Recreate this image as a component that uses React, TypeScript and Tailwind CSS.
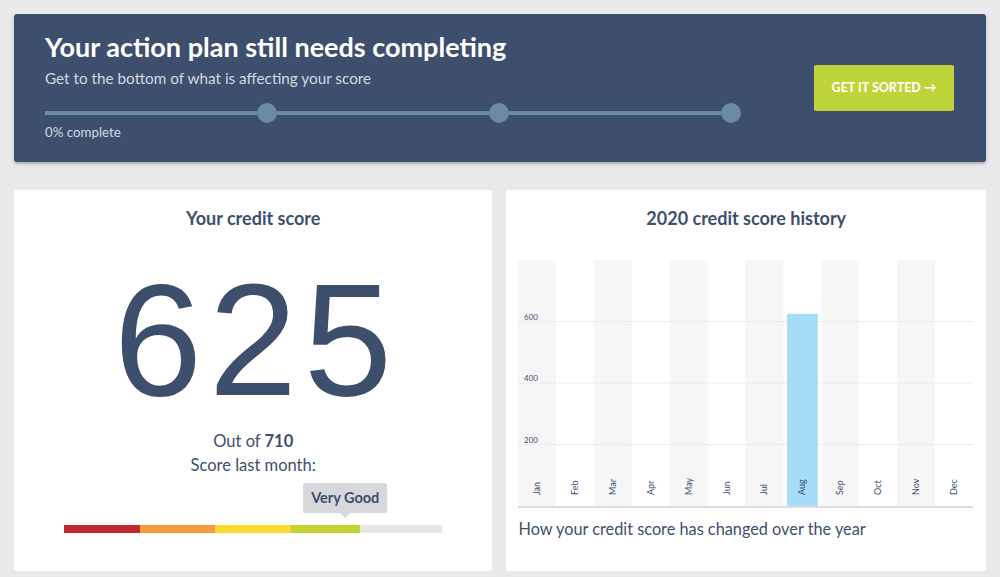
import React from "react";

const months = ["Jan", "Feb", "Mar", "Apr", "May", "Jun", "Jul", "Aug", "Sep", "Oct", "Nov", "Dec"];

function Chart() {
  const W = 455;
  const H = 248;
  const cw = W / 12;
  const base = 246;
  const scale = 246 / 800;
  const grid = [600, 400, 200];
  return (
    <svg width={W} height={H} viewBox={`0 0 ${W} ${H}`} className="block">
      {months.map((m, i) =>
        i % 2 === 0 ? <rect key={m} x={i * cw} y={0} width={cw} height={base} fill="#f6f6f6" /> : null
      )}
      {grid.map((g) => (
        <line key={g} x1={0} x2={W} y1={base - g * scale} y2={base - g * scale} stroke="#ececec" strokeWidth={1} />
      ))}
      <rect x={7 * cw + 3.5} y={base - 625 * scale} width={cw - 7} height={625 * scale} fill="#a6dcf5" />
      {grid.map((g) => (
        <text key={"t" + g} x={6} y={base - g * scale - 2} fontSize={8} fill="#3d4f6d" fontFamily="Lato, sans-serif">
          {g}
        </text>
      ))}
      {months.map((m, i) => (
        <text
          key={"m" + m}
          transform={`translate(${i * cw + cw / 2 + 3}, 235) rotate(-90)`}
          fontSize={9}
          fill="#3d4f6d"
          fontFamily="Lato, sans-serif"
        >
          {m}
        </text>
      ))}
      <line x1={0} x2={W} y1={base + 1} y2={base + 1} stroke="#dcdcdc" strokeWidth={2} />
    </svg>
  );
}

export default function App() {
  return (
    <div className="w-[1000px] h-[577px] bg-[#e9e9e9] p-[14px] overflow-hidden" style={{ fontFamily: "Lato, 'Noto Sans', sans-serif" }}>
      <div className="h-[148px] bg-[#3d4f6d] rounded-[3px] shadow-[0_2px_3px_rgba(0,0,0,0.25)] flex items-start justify-between pl-[31px] pr-[32px]">
        <div className="flex flex-col pt-[17px]">
          <div className="text-white font-bold text-[27px] leading-[32px]">Your action plan still needs completing</div>
          <div className="text-[#d3d8e0] text-[15.3px] leading-[20px] mt-[5px]">Get to the bottom of what is affecting your score</div>
          <div className="flex items-center w-[696px] mt-[15px]">
            <div className="flex-1 h-[4px] bg-[#6a8aa5]" />
            <div className="w-[20px] h-[20px] rounded-full bg-[#6a8aa5]" />
            <div className="flex-1 h-[4px] bg-[#6a8aa5]" />
            <div className="w-[20px] h-[20px] rounded-full bg-[#6a8aa5]" />
            <div className="flex-1 h-[4px] bg-[#6a8aa5]" />
            <div className="w-[20px] h-[20px] rounded-full bg-[#6a8aa5]" />
          </div>
          <div className="text-[#d3d8e0] text-[13.3px] leading-[16px] mt-[1px]">0% complete</div>
        </div>
        <div className="self-center w-[140px] h-[46px] bg-[#bfd43a] rounded-[2px] flex items-center justify-center text-white font-bold text-[12.5px]">
          GET IT SORTED →
        </div>
      </div>
      <div className="flex gap-[14px] mt-[28px]">
        <div className="w-[479px] h-[381px] bg-white rounded-[3px] flex flex-col items-center pt-[16px]">
          <div className="text-[#3d4f6d] font-bold text-[18px] leading-[24px]">Your credit score</div>
          <div
            className="text-[#3d4f6d] text-[159px] leading-none mt-[31px] tracking-[6.5px] pl-[6px]"
            style={{ fontFamily: "'Liberation Sans', Arial, sans-serif" }}
          >
            625
          </div>
          <div className="text-[#3d4f6d] text-[16.5px] leading-[24px] mt-[9px]">
            Out of <span className="font-bold">710</span>
          </div>
          <div className="text-[#3d4f6d] text-[16.5px] leading-[24px]">Score last month:</div>
          <div className="w-[378px] mt-[6px]">
            <div className="ml-[239px] relative w-[84px] h-[30px] bg-[#d6d8dc] rounded-[2px] flex items-center justify-center text-[#3d4f6d] font-bold text-[14.5px]">
              Very Good
              <div className="absolute left-1/2 -translate-x-1/2 top-full w-0 h-0 border-l-[5px] border-r-[5px] border-t-[5px] border-l-transparent border-r-transparent border-t-[#d6d8dc]" />
            </div>
            <div className="flex h-[8px] mt-[12px]">
              <div className="w-[76px] bg-[#c1272d]" />
              <div className="w-[75px] bg-[#f59a3e]" />
              <div className="w-[76px] bg-[#fcd92f]" />
              <div className="w-[69px] bg-[#c2d22f]" />
              <div className="flex-1 bg-[#e6e6e6]" />
            </div>
          </div>
        </div>
        <div className="w-[480px] h-[381px] bg-white rounded-[3px] flex flex-col pt-[16px] px-[12px]">
          <div className="text-[#3d4f6d] font-bold text-[18px] leading-[24px] text-center">2020 credit score history</div>
          <div className="mt-[30px]">
            <Chart />
          </div>
          <div className="text-[#3d4f6d] text-[16.3px] leading-[22px] mt-[10px]">How your credit score has changed over the year</div>
        </div>
      </div>
    </div>
  );
}
